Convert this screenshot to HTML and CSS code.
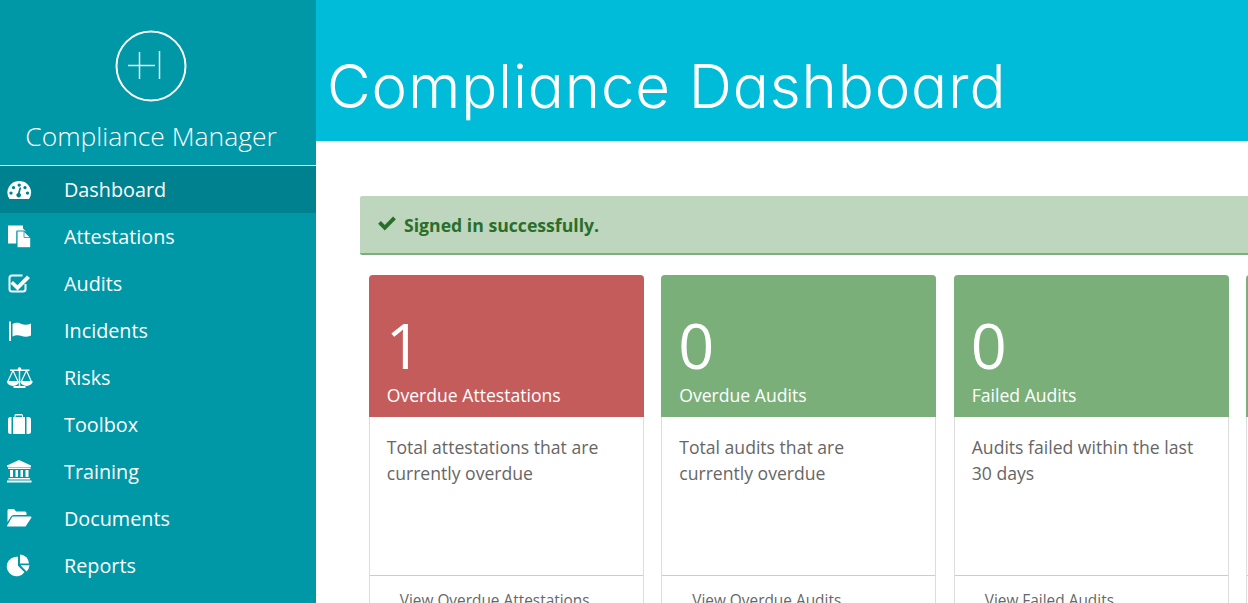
FILE: index.html
```html
<!DOCTYPE html>
<html lang="en">
<head>
<meta charset="utf-8">
<title>Compliance Dashboard</title>
<link rel="stylesheet" href="styles.css">
</head>
<body>
<div class="app">
  <aside class="sidebar">
    <div class="brand">
      <svg class="logo" viewBox="0 0 72 72" width="72" height="72"><circle cx="36" cy="36" r="34.5"/><path d="M13 35.5H40M24.500 22V49M44.500 21V49"/></svg>
      <div class="brand-name">Compliance Manager</div>
    </div>
    <nav class="nav">
      <a class="nav-item active"><svg class="ico" viewBox="0 0 28 24"><path fill-rule="evenodd" d="M3.500 21A11.500 11.500 0 0 1 13.200 3 11.500 11.500 0 0 1 23 21ZM13.200 5.500a1.600 1.600 0 1 0 .01 0ZM7.500 8a1.600 1.600 0 1 0 .01 0ZM19 8a1.600 1.600 0 1 0 .01 0ZM5 13.500a1.600 1.600 0 1 0 .01 0ZM21.500 13.500a1.600 1.600 0 1 0 .01 0ZM15.200 9.500 13.800 15.100a2.300 2.300 0 1 1-1.800-.2L13.500 9.500Z"/></svg><span>Dashboard</span></a>
      <a class="nav-item"><svg class="ico" viewBox="0 0 28 24"><path d="M2 .5H17V3.500L20 6.500H10.500V18.500H2Z"/><path class="ico-gap" d="M11 6H18L24.800 12.500V22.800H11Z"/><path class="ico-gap-thin" d="M18 6.500V12.500H24"/></svg><span>Attestations</span></a>
      <a class="nav-item"><svg class="ico" viewBox="0 0 28 24"><path class="ico-stroke" d="M16.500 3.500H6A2.500 2.500 0 0 0 3.500 6V17A2.500 2.500 0 0 0 6 19.500H17A2.500 2.500 0 0 0 19.500 17V12"/><path d="M7 9 11.500 13.200 21 3.500 24 6 11.500 18.500 4.500 11.500Z"/></svg><span>Audits</span></a>
      <a class="nav-item"><svg class="ico" viewBox="0 0 28 24"><path d="M3 2.500H5V22H3Z"/><path d="M6.500 5C10 3 13 4 15.500 5 18.500 6 21.500 6 25 4.500V16.500C21.500 18 18.500 18 15.500 17 13 16 10 15.500 6.500 17.500Z"/></svg><span>Incidents</span></a>
      <a class="nav-item"><svg class="ico" viewBox="0 0 28 24"><path d="M12.800 4.500H14.200V20H12.800ZM7.500 20H19.500V22H7.500ZM4 3.500H23.500V5H4Z"/><circle cx="13.500" cy="3" r="1.800"/><path class="ico-thin" d="M7 4.500 1.800 15.500M7 4.500 12 15.500M20.500 4.500 15.300 15.500M20.500 4.500 25.300 15.500"/><path d="M.8 15H13.200A6.200 5 0 0 1 .8 15ZM14.300 15H26.700A6.200 5 0 0 1 14.300 15Z"/></svg><span>Risks</span></a>
      <a class="nav-item"><svg class="ico" viewBox="0 0 28 24"><path fill-rule="evenodd" d="M8.500 4V2.500A1.500 1.500 0 0 1 10 1H15.500A1.500 1.500 0 0 1 17 2.500V4H16V2.500H9.500V4Z"/><path d="M7 4H19V21H7ZM5.500 4V21H4.500A2.500 2.500 0 0 1 2 18.500V6.500A2.500 2.500 0 0 1 4.500 4ZM20.500 4H22.500A2.500 2.500 0 0 1 25 6.500V18.500A2.500 2.500 0 0 1 22.500 21H20.500Z"/></svg><span>Toolbox</span></a>
      <a class="nav-item"><svg class="ico" viewBox="0 0 28 24"><path d="M13 0 25 5.500V7H1V5.500ZM2 7.500H24.500V9H2ZM4 10H7V17H4ZM9.500 10H12V17H9.500ZM14.500 10H17V17H14.500ZM19.500 10H22.500V17H19.500ZM2.500 18H24V19.500H2.500ZM1 20.500H25.500V22.500H1Z"/></svg><span>Training</span></a>
      <a class="nav-item"><svg class="ico" viewBox="0 0 28 24"><path d="M1.500 15V3.500A1.500 1.500 0 0 1 3 2H8L10 4.500H19A1.500 1.500 0 0 1 20.500 6V8H7.500A3 3 0 0 0 5 9.500Z"/><path d="M7 9.500H25A1 1 0 0 1 25.200 11L19.500 19.500H1.500A.6 .6 0 0 1 1.200 18.500L5.800 10.500A1.500 1.500 0 0 1 7 9.500Z"/></svg><span>Documents</span></a>
      <a class="nav-item"><svg class="ico" viewBox="0 0 28 24"><path d="M12 2.800V11.800L18.500 18.300A9.800 9.800 0 1 1 12 2.800Z"/><path d="M14 0.500A9.300 9.300 0 0 1 23 9.500H14Z"/><path d="M14.500 11.200H23.500A9.300 9.300 0 0 1 20.500 17.400Z"/></svg><span>Reports</span></a>
    </nav>
  </aside>
  <main class="main">
    <header class="page-head"><h1 class="page-title">Compliance Dashboard</h1></header>
    <section class="content">
      <div class="alert"><svg class="alert-check" viewBox="1 1 16 13.500"><path d="M1 8 3.500 5.500 7 9 14.500 1.500 17 4 7 14Z"/></svg><span>Signed in successfully.</span></div>
      <div class="cards">
        <article class="card">
          <div class="card-head red"><div class="card-num">1</div><div class="card-label">Overdue Attestations</div></div>
          <div class="card-body">Total attestations that are currently overdue</div>
          <div class="card-foot">View Overdue Attestations</div>
        </article>
        <article class="card">
          <div class="card-head green"><div class="card-num">0</div><div class="card-label">Overdue Audits</div></div>
          <div class="card-body">Total audits that are currently overdue</div>
          <div class="card-foot">View Overdue Audits</div>
        </article>
        <article class="card">
          <div class="card-head green"><div class="card-num">0</div><div class="card-label">Failed Audits</div></div>
          <div class="card-body">Audits failed within the last 30 days</div>
          <div class="card-foot">View Failed Audits</div>
        </article>
        <article class="card">
          <div class="card-head green"><div class="card-num">0</div><div class="card-label">Open Incidents</div></div>
          <div class="card-body">Incidents that are currently open</div>
          <div class="card-foot">View Incidents</div>
        </article>
      </div>
    </section>
  </main>
</div>
</body>
</html>
```
FILE: styles.css
```css
* { box-sizing: border-box; }
html, body { margin: 0; height: 100%; overflow: hidden; background: #fff; }
body { font-family: "Open Sans", sans-serif; color: #555; }
.app { display: flex; width: 1248px; height: 603px; overflow: hidden; }
.sidebar { flex: 0 0 316px; background: #0097a7; color: #fff; }
.brand { height: 166px; border-bottom: 1px solid #fff; display: flex; flex-direction: column; align-items: center; padding: 30px 14px 0 0; }
.logo { display: block; fill: none; stroke: #fff; }
.logo circle { stroke-width: 2; }
.logo path { stroke-width: 1.5; stroke: #e3f4f6; }
.brand-name { font-weight: 300; font-size: 26.450px; line-height: 34px; margin-top: 17px; white-space: nowrap; }
.nav { display: flex; flex-direction: column; }
.nav-item { display: flex; align-items: center; height: 47px; padding-left: 6px; font-size: 19.800px; color: #fff; }
.nav-item.active { background: #00818f; }
.ico { width: 28px; height: 24px; margin-right: 30px; fill: #fff; flex: none; }
.ico-gap { stroke: #0097a7; stroke-width: 1.100; }
.ico-gap-thin { fill: none; stroke: #0097a7; stroke-width: .8; }
.ico-stroke { fill: none; stroke: #fff; stroke-width: 2; }
.ico-thin { fill: none; stroke: #fff; stroke-width: 1.200; }
.main { flex: 1; min-width: 0; }
.page-head { height: 141px; background: #00bcd9; padding: 0 0 0 11px; }
.page-title { margin: 0; font-family: Inter, sans-serif; font-feature-settings: "cv11"; font-weight: 300; font-size: 60px; letter-spacing: .85px; line-height: 172px; height: 141px; color: #fff; white-space: nowrap; }
.content { padding: 55px 0 0 44px; }
.alert { display: flex; align-items: center; height: 59px; width: 900px; padding: 0 0 0 18px; background: #bdd6bd; border-bottom: 2px solid #7aaf7a; border-radius: 2px 0 0 2px; color: #2a6e2a; font-weight: 700; font-size: 17.650px; }
.alert-check { width: 18px; height: 15px; margin: -3px 8px 0 0; fill: #2a6e2a; flex: none; }
.cards { display: flex; gap: 17.300px; margin: 20px 0 0 8.750px; width: 1300px; }
.card { flex: 0 0 275.200px; height: 400px; border: 1px solid #ddd; border-top: 0; border-radius: 4px 4px 0 0; background: #fff; }
.card-head { height: 142px; margin: 0 -1px; padding: 34px 0 0 18px; color: #fff; border-radius: 4px 4px 0 0; }
.card-head.red { background: #c45c5c; }
.card-head.green { background: #7aaf7a; }
.card-num { font-weight: 400; font-size: 63px; line-height: 72px; margin-left: -1px; }
.card-label { font-size: 17.600px; line-height: 24px; margin-top: 2px; }
.card-body { height: 159px; padding: 17px 18px 0 17px; font-size: 17.600px; line-height: 26px; border-bottom: 1px solid #ccc; color: #666; }
.card-foot { padding: 14px 0 0 30px; font-size: 15.400px; line-height: 22px; color: #666; }
```
